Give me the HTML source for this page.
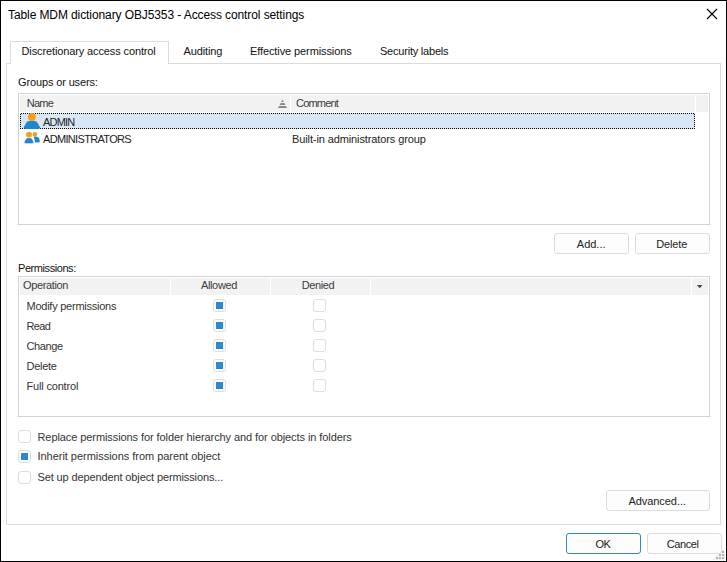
<!DOCTYPE html>
<html>
<head>
<meta charset="utf-8">
<style>
html,body{margin:0;padding:0;}
body{width:727px;height:562px;overflow:hidden;background:#fff;position:relative;font-family:"Liberation Sans",sans-serif;font-size:11px;color:#333;}
.a{position:absolute;}
.t{position:absolute;white-space:nowrap;line-height:1;}
#win{left:0;top:0;width:725px;height:560px;border:1px solid #000;}
.box{position:absolute;box-sizing:border-box;}
.btn{position:absolute;box-sizing:border-box;border:1px solid #dcdcdc;border-radius:3px;background:#fdfdfd;}
.cb{position:absolute;box-sizing:border-box;width:13px;height:13px;border:1px solid #dddddd;border-radius:3px;background:#fff;}
.cb.on::after{content:"";position:absolute;left:2px;top:2px;width:7px;height:7px;background:#2b8bd0;}
.hdr{position:absolute;background:#f2f2f2;}
.sep{position:absolute;width:1px;background:#fff;}
</style>
</head>
<body>
<div id="win" class="a"></div>
<svg class="a" style="left:706px;top:8px" width="12" height="12" viewBox="0 0 12 12"><path d="M1 1L11 11M11 1L1 11" stroke="#000" stroke-width="1.1" fill="none"/></svg>

<!-- panel -->
<div class="box" style="left:6px;top:63px;width:715px;height:462px;border:1px solid #dddcd6;"></div>
<div class="box" style="left:10px;top:41px;width:159px;height:23px;border:1px solid #dddcd6;border-bottom:none;background:#fff;"></div>

<!-- groups list -->
<div class="box" style="left:18px;top:93px;width:692px;height:132px;border:1px solid #d1d5da;"></div>
<div class="hdr" style="left:20px;top:95px;width:688px;height:17px;"></div>
<div class="sep" style="left:290px;top:95px;height:17px;"></div>
<div class="sep" style="left:695px;top:95px;height:17px;"></div>
<svg class="a" style="left:277px;top:99px" width="11" height="10" viewBox="0 0 11 10"><path d="M5.5 0.5L10 9H1Z" fill="#888"/><rect x="0" y="3" width="11" height="1" fill="#f2f2f2"/><rect x="0" y="6" width="11" height="1" fill="#f2f2f2"/></svg>

<div class="a" style="left:20px;top:113px;width:675px;height:16px;background:#d7e7f5;"></div>



<svg class="a" style="left:0;top:0" width="727" height="562" shape-rendering="crispEdges"><defs><pattern id="chk" patternUnits="userSpaceOnUse" width="2" height="2"><rect x="0" y="0" width="1" height="1" fill="#000"/><rect x="1" y="1" width="1" height="1" fill="#000"/></pattern></defs><path fill-rule="evenodd" fill="url(#chk)" d="M20 113H695V129H20ZM21 114H694V128H21Z"/></svg>
<svg class="a" style="left:23px;top:112px" width="18" height="18" viewBox="0 0 18 18">
<circle cx="8.9" cy="4.9" r="4" fill="#f5a01f"/>
<path d="M3.2 11Q3.9 9 6.2 9H11.6Q13.9 9 14.6 11L16.9 14.9C17.6 16.3 16.6 16.9 12.5 16.9H5.3C1.2 16.9 0.2 16.3 0.9 14.9Z" fill="#1e88c8"/>
</svg>
<svg class="a" style="left:23px;top:130px" width="18" height="16" viewBox="0 0 18 16">
<circle cx="11.85" cy="4.4" r="2.3" fill="#f5a01f"/>
<path d="M11 6.7H14Q15.5 6.7 16 8.2L16.8 10.8Q17.2 12.5 15.5 12.5H12Z" fill="#1e88c8"/>
<circle cx="6" cy="4.85" r="3" fill="#f5a01f"/>
<path d="M2.5 9.5Q3.2 7.65 5 7.65H7Q8.8 7.65 9.5 9.5L10.8 11.8Q11.4 13.7 9 13.7H3Q0.6 13.7 1.2 11.8Z" fill="#1e88c8" stroke="#fff" stroke-width="0.7"/>
</svg>
<div class="btn" style="left:554px;top:233px;width:75px;height:21px;"></div>
<div class="btn" style="left:635px;top:233px;width:75px;height:21px;"></div>

<!-- permissions -->
<div class="box" style="left:18px;top:276px;width:692px;height:141px;border:1px solid #d1d5da;"></div>
<div class="hdr" style="left:20px;top:278px;width:688px;height:17px;"></div>
<div class="sep" style="left:170px;top:278px;height:17px;"></div>
<div class="sep" style="left:270px;top:278px;height:17px;"></div>
<div class="sep" style="left:370px;top:278px;height:17px;"></div>
<div class="sep" style="left:691px;top:278px;height:17px;"></div>
<svg class="a" style="left:696px;top:284px" width="8" height="5" viewBox="0 0 8 5"><path d="M0.9 1H6.5L3.7 4.2Z" fill="#444"/></svg>
<div class="cb on" style="left:213px;top:299px;"></div>
<div class="cb" style="left:313px;top:299px;"></div>
<div class="cb on" style="left:213px;top:319px;"></div>
<div class="cb" style="left:313px;top:319px;"></div>
<div class="cb on" style="left:213px;top:339px;"></div>
<div class="cb" style="left:313px;top:339px;"></div>
<div class="cb on" style="left:213px;top:359px;"></div>
<div class="cb" style="left:313px;top:359px;"></div>
<div class="cb on" style="left:213px;top:379px;"></div>
<div class="cb" style="left:313px;top:379px;"></div>
<div class="cb" style="left:18px;top:430px;"></div>
<div class="cb on" style="left:18px;top:450px;"></div>
<div class="cb" style="left:18px;top:471px;"></div>
<div class="btn" style="left:606px;top:490px;width:104px;height:21px;"></div>
<svg class="a" style="left:712px;top:547px" width="13" height="13" viewBox="0 0 13 13" fill="#b4b4b4"><path d="M13 0V13H0Z" fill="#f2f2f2"/>
<rect x="10" y="4" width="2" height="2"/>
<rect x="7" y="7" width="2" height="2"/><rect x="10" y="7" width="2" height="2"/>
<rect x="4" y="10" width="2" height="2"/><rect x="7" y="10" width="2" height="2"/><rect x="10" y="10" width="2" height="2"/>
</svg>
<div class="btn" style="left:566px;top:533px;width:75px;height:21px;border-color:#3088cc;"></div>
<div class="btn" style="left:647px;top:533px;width:75px;height:21px;"></div>


<div class="t" id="title" style="left:8.00px;top:9px;letter-spacing:-0.097px;font-size:12px;color:#000;">Table MDM dictionary OBJ5353 - Access control settings</div>
<div class="t" id="tab1" style="left:21.50px;top:46px;letter-spacing:-0.120px;color:#111;">Discretionary access control</div>
<div class="t" id="tab2" style="left:183.50px;top:46px;letter-spacing:-0.112px;color:#111;">Auditing</div>
<div class="t" id="tab3" style="left:250.00px;top:46px;letter-spacing:-0.100px;color:#111;">Effective permissions</div>
<div class="t" id="tab4" style="left:380.00px;top:46px;letter-spacing:-0.213px;color:#111;">Security labels</div>
<div class="t" id="grp" style="left:18.00px;top:77px;letter-spacing:-0.134px;color:#111;">Groups or users:</div>
<div class="t" id="hname" style="left:26.70px;top:98px;letter-spacing:-0.740px;color:#3a3a3a;">Name</div>
<div class="t" id="hcomm" style="left:296.00px;top:98px;letter-spacing:-0.810px;color:#3a3a3a;">Comment</div>
<div class="t" id="admin" style="left:43.00px;top:117px;letter-spacing:-0.825px;color:#222;">ADMIN</div>
<div class="t" id="admins" style="left:43.00px;top:134px;letter-spacing:-0.669px;color:#222;">ADMINISTRATORS</div>
<div class="t" id="built" style="left:292.00px;top:134px;letter-spacing:-0.112px;color:#222;">Built-in administrators group</div>
<div class="t" id="add" style="left:576.80px;top:239px;letter-spacing:-0.002px;color:#222;">Add...</div>
<div class="t" id="del" style="left:656.20px;top:239px;letter-spacing:-0.146px;color:#222;">Delete</div>
<div class="t" id="perm" style="left:18.00px;top:263px;letter-spacing:-0.430px;color:#111;">Permissions:</div>
<div class="t" id="op" style="left:23.00px;top:280px;letter-spacing:-0.369px;color:#3a3a3a;">Operation</div>
<div class="t" id="allow" style="left:200.90px;top:280px;letter-spacing:-0.335px;color:#3a3a3a;">Allowed</div>
<div class="t" id="deny" style="left:301.80px;top:280px;letter-spacing:-0.416px;color:#3a3a3a;">Denied</div>
<div class="t" id="r1" style="left:26.50px;top:301px;letter-spacing:-0.245px;">Modify permissions</div>
<div class="t" id="r2" style="left:26.50px;top:321px;letter-spacing:-0.610px;">Read</div>
<div class="t" id="r3" style="left:26.50px;top:341px;letter-spacing:-0.358px;">Change</div>
<div class="t" id="r4" style="left:26.50px;top:361px;letter-spacing:-0.286px;">Delete</div>
<div class="t" id="r5" style="left:26.50px;top:381px;letter-spacing:-0.176px;">Full control</div>
<div class="t" id="c1" style="left:37.50px;top:432px;letter-spacing:-0.083px;">Replace permissions for folder hierarchy and for objects in folders</div>
<div class="t" id="c2" style="left:37.50px;top:451px;letter-spacing:-0.032px;">Inherit permissions from parent object</div>
<div class="t" id="c3" style="left:37.50px;top:472px;letter-spacing:-0.120px;">Set up dependent object permissions...</div>
<div class="t" id="adv" style="left:628.50px;top:496px;letter-spacing:-0.065px;color:#222;">Advanced...</div>
<div class="t" id="ok" style="left:595.50px;top:539px;letter-spacing:-0.500px;color:#222;">OK</div>
<div class="t" id="cancel" style="left:666.80px;top:539px;letter-spacing:-0.434px;color:#222;">Cancel</div>
</body>
</html>
